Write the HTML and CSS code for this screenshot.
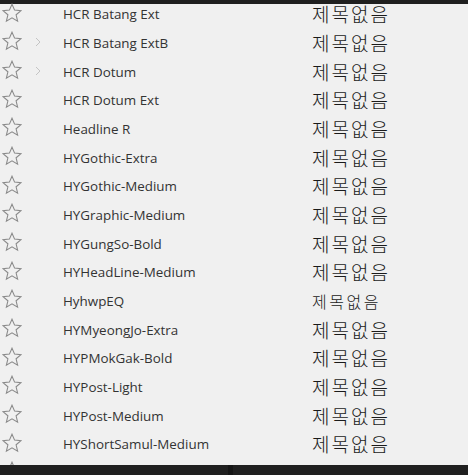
FILE: index.html
```html
<!DOCTYPE html>
<html>
<head>
<meta charset="utf-8">
<link rel="stylesheet" href="styles.css">
</head>
<body>
<div class="topbar"></div>
<div class="viewport">
  <div class="list">
    <div class="row row-first"><span class="star"><svg viewBox="0 0 20 20" width="20" height="20"><path d="M10 1.2 L12.6 7.1 L19 7.6 L14.1 11.8 L15.6 18.2 L10 14.8 L4.4 18.2 L5.9 11.8 L1 7.6 L7.4 7.1 Z"/></svg></span><span class="chev"></span><span class="name">HCR Batang Ext</span><span class="ko">제목없음</span></div>
    <div class="row"><span class="star"><svg viewBox="0 0 20 20" width="20" height="20"><path d="M10 1.2 L12.6 7.1 L19 7.6 L14.1 11.8 L15.6 18.2 L10 14.8 L4.4 18.2 L5.9 11.8 L1 7.6 L7.4 7.1 Z"/></svg></span><span class="chev"><svg viewBox="0 0 6 10" width="6" height="10"><path d="M1 1 L5 5 L1 9"/></svg></span><span class="name">HCR Batang ExtB</span><span class="ko">제목없음</span></div>
    <div class="row"><span class="star"><svg viewBox="0 0 20 20" width="20" height="20"><path d="M10 1.2 L12.6 7.1 L19 7.6 L14.1 11.8 L15.6 18.2 L10 14.8 L4.4 18.2 L5.9 11.8 L1 7.6 L7.4 7.1 Z"/></svg></span><span class="chev"><svg viewBox="0 0 6 10" width="6" height="10"><path d="M1 1 L5 5 L1 9"/></svg></span><span class="name">HCR Dotum</span><span class="ko">제목없음</span></div>
    <div class="row"><span class="star"><svg viewBox="0 0 20 20" width="20" height="20"><path d="M10 1.2 L12.6 7.1 L19 7.6 L14.1 11.8 L15.6 18.2 L10 14.8 L4.4 18.2 L5.9 11.8 L1 7.6 L7.4 7.1 Z"/></svg></span><span class="chev"></span><span class="name">HCR Dotum Ext</span><span class="ko">제목없음</span></div>
    <div class="row"><span class="star"><svg viewBox="0 0 20 20" width="20" height="20"><path d="M10 1.2 L12.6 7.1 L19 7.6 L14.1 11.8 L15.6 18.2 L10 14.8 L4.4 18.2 L5.9 11.8 L1 7.6 L7.4 7.1 Z"/></svg></span><span class="chev"></span><span class="name">Headline R</span><span class="ko">제목없음</span></div>
    <div class="row"><span class="star"><svg viewBox="0 0 20 20" width="20" height="20"><path d="M10 1.2 L12.6 7.1 L19 7.6 L14.1 11.8 L15.6 18.2 L10 14.8 L4.4 18.2 L5.9 11.8 L1 7.6 L7.4 7.1 Z"/></svg></span><span class="chev"></span><span class="name">HYGothic-Extra</span><span class="ko">제목없음</span></div>
    <div class="row"><span class="star"><svg viewBox="0 0 20 20" width="20" height="20"><path d="M10 1.2 L12.6 7.1 L19 7.6 L14.1 11.8 L15.6 18.2 L10 14.8 L4.4 18.2 L5.9 11.8 L1 7.6 L7.4 7.1 Z"/></svg></span><span class="chev"></span><span class="name">HYGothic-Medium</span><span class="ko">제목없음</span></div>
    <div class="row"><span class="star"><svg viewBox="0 0 20 20" width="20" height="20"><path d="M10 1.2 L12.6 7.1 L19 7.6 L14.1 11.8 L15.6 18.2 L10 14.8 L4.4 18.2 L5.9 11.8 L1 7.6 L7.4 7.1 Z"/></svg></span><span class="chev"></span><span class="name">HYGraphic-Medium</span><span class="ko">제목없음</span></div>
    <div class="row"><span class="star"><svg viewBox="0 0 20 20" width="20" height="20"><path d="M10 1.2 L12.6 7.1 L19 7.6 L14.1 11.8 L15.6 18.2 L10 14.8 L4.4 18.2 L5.9 11.8 L1 7.6 L7.4 7.1 Z"/></svg></span><span class="chev"></span><span class="name">HYGungSo-Bold</span><span class="ko">제목없음</span></div>
    <div class="row"><span class="star"><svg viewBox="0 0 20 20" width="20" height="20"><path d="M10 1.2 L12.6 7.1 L19 7.6 L14.1 11.8 L15.6 18.2 L10 14.8 L4.4 18.2 L5.9 11.8 L1 7.6 L7.4 7.1 Z"/></svg></span><span class="chev"></span><span class="name">HYHeadLine-Medium</span><span class="ko">제목없음</span></div>
    <div class="row"><span class="star"><svg viewBox="0 0 20 20" width="20" height="20"><path d="M10 1.2 L12.6 7.1 L19 7.6 L14.1 11.8 L15.6 18.2 L10 14.8 L4.4 18.2 L5.9 11.8 L1 7.6 L7.4 7.1 Z"/></svg></span><span class="chev"></span><span class="name">HyhwpEQ</span><span class="ko ko-small">제목없음</span></div>
    <div class="row"><span class="star"><svg viewBox="0 0 20 20" width="20" height="20"><path d="M10 1.2 L12.6 7.1 L19 7.6 L14.1 11.8 L15.6 18.2 L10 14.8 L4.4 18.2 L5.9 11.8 L1 7.6 L7.4 7.1 Z"/></svg></span><span class="chev"></span><span class="name">HYMyeongJo-Extra</span><span class="ko">제목없음</span></div>
    <div class="row"><span class="star"><svg viewBox="0 0 20 20" width="20" height="20"><path d="M10 1.2 L12.6 7.1 L19 7.6 L14.1 11.8 L15.6 18.2 L10 14.8 L4.4 18.2 L5.9 11.8 L1 7.6 L7.4 7.1 Z"/></svg></span><span class="chev"></span><span class="name">HYPMokGak-Bold</span><span class="ko">제목없음</span></div>
    <div class="row"><span class="star"><svg viewBox="0 0 20 20" width="20" height="20"><path d="M10 1.2 L12.6 7.1 L19 7.6 L14.1 11.8 L15.6 18.2 L10 14.8 L4.4 18.2 L5.9 11.8 L1 7.6 L7.4 7.1 Z"/></svg></span><span class="chev"></span><span class="name">HYPost-Light</span><span class="ko">제목없음</span></div>
    <div class="row"><span class="star"><svg viewBox="0 0 20 20" width="20" height="20"><path d="M10 1.2 L12.6 7.1 L19 7.6 L14.1 11.8 L15.6 18.2 L10 14.8 L4.4 18.2 L5.9 11.8 L1 7.6 L7.4 7.1 Z"/></svg></span><span class="chev"></span><span class="name">HYPost-Medium</span><span class="ko">제목없음</span></div>
    <div class="row"><span class="star"><svg viewBox="0 0 20 20" width="20" height="20"><path d="M10 1.2 L12.6 7.1 L19 7.6 L14.1 11.8 L15.6 18.2 L10 14.8 L4.4 18.2 L5.9 11.8 L1 7.6 L7.4 7.1 Z"/></svg></span><span class="chev"></span><span class="name">HYShortSamul-Medium</span><span class="ko">제목없음</span></div>
    <div class="row"><span class="star"><svg viewBox="0 0 20 20" width="20" height="20"><path d="M10 1.2 L12.6 7.1 L19 7.6 L14.1 11.8 L15.6 18.2 L10 14.8 L4.4 18.2 L5.9 11.8 L1 7.6 L7.4 7.1 Z"/></svg></span></div>
  </div>
</div>
<div class="bottombar"><div class="bb-left"></div><div class="bb-divider"></div><div class="bb-right"></div></div>
</body>
</html>
```

FILE: styles.css
```css
html, body {
  margin: 0;
  padding: 0;
  width: 468px;
  height: 475px;
  overflow: hidden;
  background: #f0f0f0;
}
.topbar {
  height: 4px;
  background: #1f1f1f;
}
.viewport {
  height: 461px;
}
.list {
  display: flex;
  flex-direction: column;
}
.row {
  height: 28.67px;
  flex: 0 0 28.67px;
  display: flex;
  align-items: center;
}
.row-first {
  height: 24.67px;
  flex-basis: 24.67px;
  padding-bottom: 4px;
  box-sizing: border-box;
}
.star {
  width: 20px;
  height: 20px;
  margin-left: 2px;
  margin-top: -3px;
  display: flex;
}
.star path {
  fill: none;
  stroke: #8a8a8a;
  stroke-width: 1.1;
  stroke-linejoin: miter;
}
.chev {
  width: 6px;
  height: 10px;
  margin-left: 13px;
  margin-top: -2px;
  display: flex;
}
.chev path {
  fill: none;
  stroke: #c4c4c4;
  stroke-width: 1;
}
.name {
  margin-left: 22px;
  width: 249px;
  font-family: "Open Sans", "Noto Sans", sans-serif;
  font-size: 13.4px;
  line-height: 16px;
  color: #333333;
  white-space: nowrap;
}
.ko {
  font-family: "Noto Sans CJK KR", sans-serif;
  font-size: 19px;
  line-height: 16px;
  font-weight: 300;
  color: #1a1a1a;
  letter-spacing: 2px;
  white-space: nowrap;
}
.ko-small {
  font-size: 16px;
  letter-spacing: 2.5px;
}
.bottombar {
  height: 10px;
  display: flex;
  background: #202020;
  position: relative;
  z-index: 1;
}
.bb-left {
  width: 228px;
}
.bb-divider {
  width: 5px;
  background: #161616;
}
.bb-right {
  flex: 1;
}
```
